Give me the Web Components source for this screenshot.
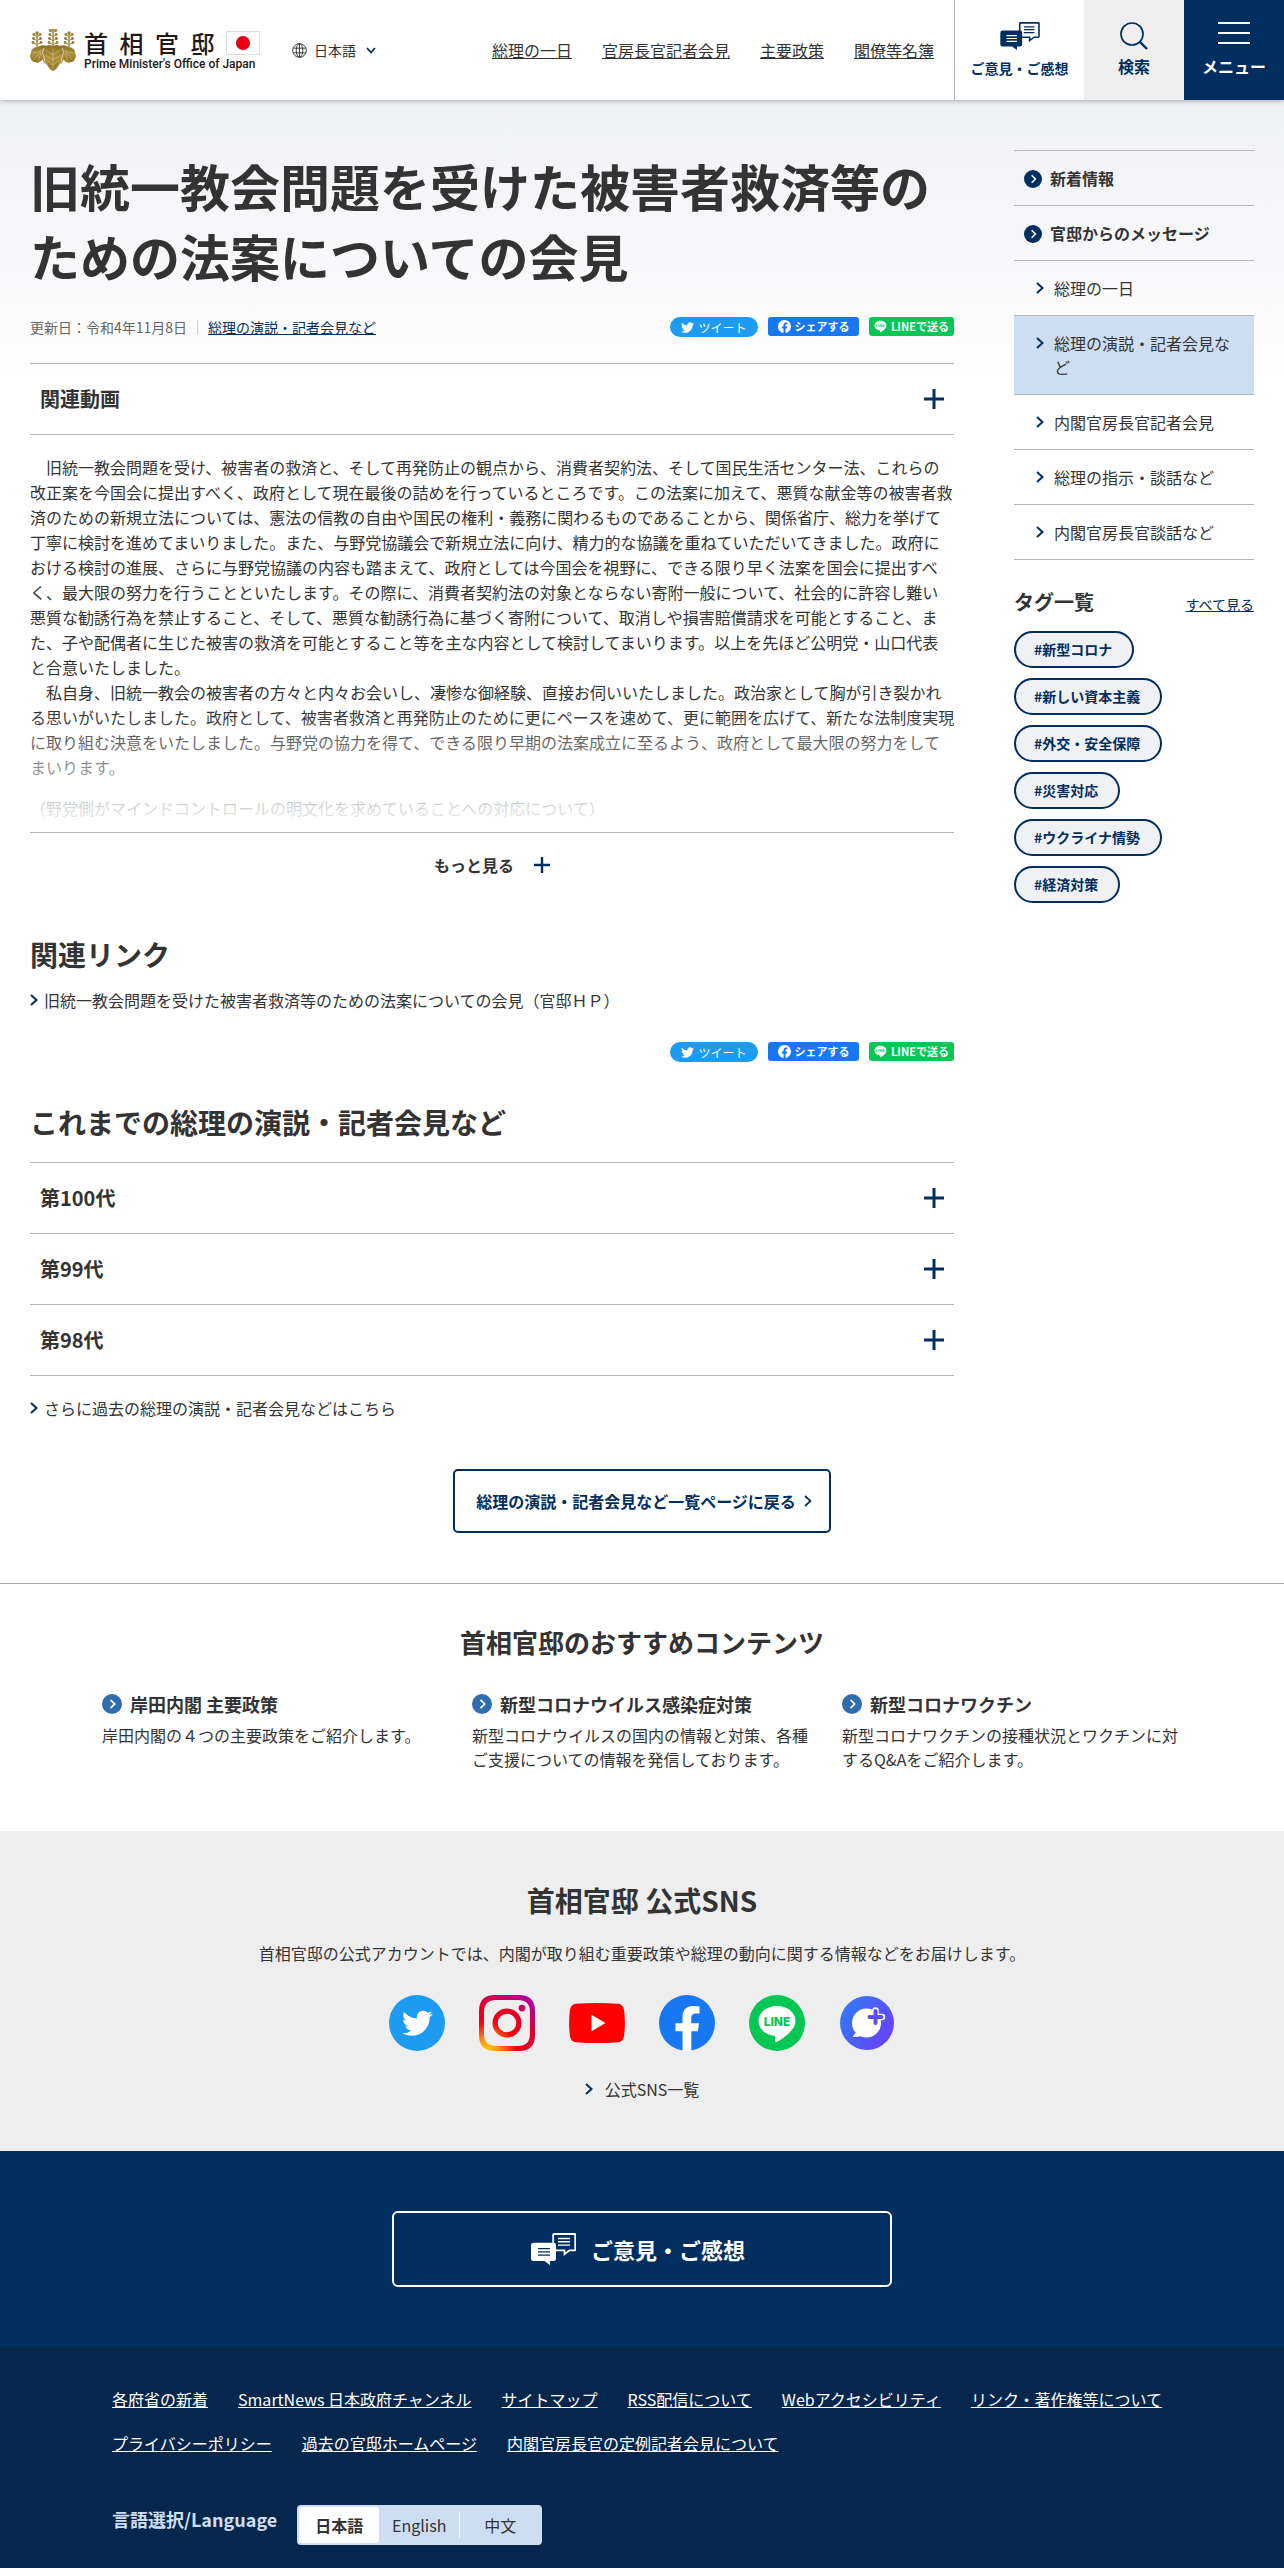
<!DOCTYPE html>
<html lang="ja">
<head>
<meta charset="utf-8">
<meta name="viewport" content="width=device-width, initial-scale=1">
<title>旧統一教会問題を受けた被害者救済等のための法案についての会見 | 首相官邸ホームページ</title>
<style>
body{
    margin: 0;
    background: #fff;
    color: #333;
    font-family: "Noto Sans CJK JP", sans-serif;
    font-size: 16px;
    line-height: 24px;
    --navy: #002e5e;
    --line: #b4b6ba;
    --pale: #cdddf2;
}
more-text .wide{
    margin-right: -1px;
}
more-text .question{
    margin-top: 16px;
}
section-title + accordion-list{
    margin-top: 20px;
}
</style>
</head>
<body>
<site-header></site-header>
<page-columns>
    <article-head slot="main" date="令和4年11月8日" category="総理の演説・記者会見など">旧統一教会問題を受けた被害者救済等のための法案についての会見</article-head>
    <accordion-list slot="main">
        <accordion-item>関連動画</accordion-item>
    </accordion-list>
    <more-text slot="main">
        <div>　旧統一教会問題を受け、被害者の救済と、そして再発防止の観点から、消費者契約法、そして国民生活センター法、これらの改正案を今国会に提出すべく、政府として現在最後の詰めを行っているところです。この法案に加えて、悪質な献金等の被害者救済のための新規立法については、憲法の信教の自由や国民の権利・義務に関わるものであることから、関係省庁、総力を挙げて丁寧に検討を進めてまいりました。また、与野党協議会で新規立法に向け、精力的な協議を重ねていただいてきました。政府における検討の進展、さらに与野党協議の内容も踏まえて、政府としては今国会を視野に、できる限り早く法案を国会に提出すべく、最大限の努力を行うことといたします。その際に、消費者契約法の対象とならない寄附一般について、社会的に許容し難い悪質な勧誘行為を禁止すること、そして、悪質な勧誘行為に基づく寄附について、取消しや損害賠償請求を可能とすること、また、子や配偶者に生じた被害の救済を可能とすること等を主な内容として検討してまいります。以上を先ほど公明党・山口代表と合意いたしました。</div>
        <div class="wide">　私自身、旧統一教会の被害者の方々と内々お会いし、凄惨な御経験、直接お伺いいたしました。政治家として胸が引き裂かれる思いがいたしました。政府として、被害者救済と再発防止のために更にペースを速めて、更に範囲を広げて、新たな法制度実現に取り組む決意をいたしました。与野党の協力を得て、できる限り早期の法案成立に至るよう、政府として最大限の努力をしてまいります。</div>
        <div class="question">（野党側がマインドコントロールの明文化を求めていることへの対応について）</div>
    </more-text>
    <section-title slot="main">関連リンク</section-title>
    <arrow-link slot="main">旧統一教会問題を受けた被害者救済等のための法案についての会見（官邸ＨＰ）</arrow-link>
    <share-buttons slot="main" class="bottom"></share-buttons>
    <section-title slot="main">これまでの総理の演説・記者会見など</section-title>
    <accordion-list slot="main">
        <accordion-item>第100代</accordion-item>
        <accordion-item>第99代</accordion-item>
        <accordion-item>第98代</accordion-item>
    </accordion-list>
    <arrow-link slot="main">さらに過去の総理の演説・記者会見などはこちら</arrow-link>

    <side-nav slot="side">
        <side-link type="head">新着情報</side-link>
        <side-link type="head">官邸からのメッセージ</side-link>
        <side-link>総理の一日</side-link>
        <side-link current>総理の演説・記者会見など</side-link>
        <side-link>内閣官房長官記者会見</side-link>
        <side-link>総理の指示・談話など</side-link>
        <side-link>内閣官房長官談話など</side-link>
    </side-nav>
    <tag-list slot="side">
        <tag-link>#新型コロナ</tag-link>
        <tag-link>#新しい資本主義</tag-link>
        <tag-link>#外交・安全保障</tag-link>
        <tag-link>#災害対応</tag-link>
        <tag-link>#ウクライナ情勢</tag-link>
        <tag-link>#経済対策</tag-link>
    </tag-list>
</page-columns>
<back-link>総理の演説・記者会見など一覧ページに戻る</back-link>
<pickup-section>
    <pickup-card heading="岸田内閣 主要政策">岸田内閣の４つの主要政策をご紹介します。</pickup-card>
    <pickup-card heading="新型コロナウイルス感染症対策">新型コロナウイルスの国内の情報と対策、各種ご支援についての情報を発信しております。</pickup-card>
    <pickup-card heading="新型コロナワクチン">新型コロナワクチンの接種状況とワクチンに対するQ&amp;Aをご紹介します。</pickup-card>
</pickup-section>
<sns-section></sns-section>
<opinion-section></opinion-section>
<site-footer></site-footer>

<script>
// base: puts the html of the class in an open shadow root
class Part extends HTMLElement{
    constructor() {
        super();
        const template = document.createElement('template');
        template.innerHTML = this.html();
        this.attachShadow({mode: 'open'}).appendChild(template.content.cloneNode(true));
    }
}

const BIRD = 'M23.953 4.57a10 10 0 01-2.825.775 4.958 4.958 0 002.163-2.723c-.951.555-2.005.959-3.127 1.184a4.92 4.92 0 00-8.384 4.482C7.69 8.095 4.067 6.13 1.64 3.162a4.822 4.822 0 00-.666 2.475c0 1.71.87 3.213 2.188 4.096a4.904 4.904 0 01-2.228-.616v.06a4.923 4.923 0 003.946 4.827 4.996 4.996 0 01-2.212.085 4.936 4.936 0 004.604 3.417 9.867 9.867 0 01-6.102 2.105c-.39 0-.779-.023-1.17-.067a13.995 13.995 0 007.557 2.209c9.053 0 13.998-7.496 13.998-13.985 0-.21 0-.42-.015-.63A9.935 9.935 0 0024 4.59z';
const FACEBOOK = 'M24 12.073c0-6.627-5.373-12-12-12s-12 5.373-12 12c0 5.99 4.388 10.954 10.125 11.854v-8.385H7.078v-3.47h3.047V9.43c0-3.007 1.792-4.669 4.533-4.669 1.312 0 2.686.235 2.686.235v2.953H15.83c-1.491 0-1.956.925-1.956 1.874v2.25h3.328l-.532 3.47h-2.796v8.385C19.612 23.027 24 18.062 24 12.073z';
const BALLOON = 'M28 11c-10.500 0-18.500 6.600-18.500 15 0 7.400 6.400 13.600 15.200 14.800 2.200.4 1.700 1.600 1.300 5.200-.1 1 .6 1.500 1.600 1 4-2 18.900-11 18.900-21 0-8.400-8-15-18.500-15z';

// one flower stalk of the crest, drawn upwards from its foot
function stalk(x, foot, steps){
    let out = '<path d="M' + x + ' ' + foot + 'v-' + (steps * 4 + 2) + '" stroke="#8d7426" stroke-width="1.200"/>';
    for(let i = 0; i < steps; i++){
        const y = foot - 2.500 - i * 4;
        const w = 4 - i * .400;
        out += '<path d="M' + x + ' ' + y + 'l-' + w + '-1.600M' + x + ' ' + y + 'l' + w + '-1.600" stroke="#a58a35"/>';
        out += '<circle cx="' + (x - w) + '" cy="' + (y - 2) + '" r="1.400"/><circle cx="' + (x + w) + '" cy="' + (y - 2) + '" r="1.400"/>';
    }
    return out + '<circle cx="' + x + '" cy="' + (foot - steps * 4 - 2) + '" r="1.700"/>';
}

const ICONS = {
    chevron: ['0 0 8 12', '<path d="M1 1l5.500 5L1 11" fill="none" stroke="currentColor" stroke-width="2"/>'],
    thin: ['0 0 8 12', '<path d="M1 1l5.500 5L1 11" fill="none" stroke="currentColor" stroke-width="1.700"/>'],
    down: ['0 0 10 7', '<path d="M1 1l4 4.500L9 1" fill="none" stroke="currentColor" stroke-width="1.800"/>'],
    plus: ['0 0 20 20', '<path d="M10 0v20M0 10h20" stroke="currentColor" stroke-width="3"/>'],
    round: ['0 0 20 20', '<circle cx="10" cy="10" r="10" fill="currentColor"/><path d="M8.500 5.800L12.700 10l-4.200 4.200" fill="none" stroke="#fff" stroke-width="1.700"/>'],
    globe: ['0 0 16 16', '<g fill="none" stroke="currentColor"><circle cx="8" cy="8" r="7.300"/><ellipse cx="8" cy="8" rx="3.500" ry="7.300"/><path d="M1.500 5.500h13M1.500 10.500h13M8 1v14"/></g>'],
    search: ['0 0 28 28', '<g fill="none" stroke="currentColor" stroke-width="1.700"><circle cx="12" cy="12" r="11"/><path d="M19.500 19.500l7.500 7.500" stroke-width="2.400"/></g>'],
    menu: ['0 0 32 22', '<path d="M0 1h32M0 11h32M0 21h32" stroke="currentColor" stroke-width="2"/>'],
    talk: ['0 0 45 32', `
        <path d="M23 1h20.500q.7 0 .7.700v15q0 .700-.7.700H38.500l-5 3.800v-3.800H22.200V1.700q0-.7.800-.7z" fill="none" stroke="currentColor" stroke-width="1.800"/>
        <path d="M27 5.500h12M27 8.800h12M27 12.100h12" stroke="currentColor" stroke-width="1.400"/>
        <path d="M2.500 9.800h20q2.500 0 2.500 2.500v13.200q0 2.500-2.500 2.500H19v4l-5.500-4h-11Q0 28 0 25.500V12.300q0-2.500 2.500-2.500z" fill="currentColor"/>
        <path d="M7 15.600h12M7 18.900h12M7 22.200h12" stroke="var(--paper)" stroke-width="1.300"/>`],
    bird: ['0 0 24 24', '<path fill="currentColor" d="' + BIRD + '"/>'],
    fb: ['0 0 24 24', '<path fill="currentColor" d="' + FACEBOOK + '"/>'],
    linemark: ['8 9 40 40', '<path d="' + BALLOON + '" fill="currentColor"/><path d="M16 22v8h4M23 22v8M27 30v-8l5 8v-8M40 22h-4v8h4M36 26h4" fill="none" stroke="#06c755" stroke-width="2"/>'],
    twitter: ['0 0 56 56', '<circle cx="28" cy="28" r="28" fill="#1d9bf0"/><path transform="translate(13 13) scale(1.280)" fill="#fff" d="' + BIRD + '"/>'],
    instagram: ['0 0 56 56', `
        <defs><radialGradient id="ig" cx=".15" cy="1" r="1.250"><stop offset="0" stop-color="#fc0"/><stop offset=".18" stop-color="#fb8c1a"/><stop offset=".42" stop-color="#f00010"/><stop offset=".68" stop-color="#e0002c"/><stop offset=".85" stop-color="#c1007c"/><stop offset="1" stop-color="#b000a0"/></radialGradient></defs>
        <path fill="url(#ig)" fill-rule="evenodd" d="M16 0h24q16 0 16 16v24q0 16-16 16H16Q0 56 0 40V16Q0 0 16 0zM17 5Q5 5 5 17v22q0 12 12 12h22q12 0 12-12V17Q51 5 39 5zM28 13.500a14.500 14.500 0 110 29 14.500 14.500 0 010-29zM28 18.700a9.300 9.300 0 100 18.600 9.300 9.300 0 000-18.600zM43 9.700a3.400 3.400 0 110 6.800 3.400 3.400 0 010-6.800z"/>`],
    youtube: ['0 0 56 56', '<path fill="red" d="M7 8.800Q28 7 49 8.800q5 .5 6 6 1.800 13.200 0 26.400-1 5.500-6 6-21 1.800-42 0-5-.5-6-6-1.800-13.200 0-26.400 1-5.500 6-6z"/><path fill="#fff" d="M22.500 19.800v16.400L36.500 28z"/>'],
    facebook: ['0 0 56 56', '<circle cx="28" cy="28" r="28" fill="#1877f2"/><path fill="#fff" d="M23.500 56V36.200h-7v-8h7V22c0-7.200 4.100-11 10.500-11 3 0 6.500.600 6.500.600v6.800H37c-3.600 0-4.700 2.200-4.700 4.500v5.300h7.800l-1.300 8h-6.500V56q-4.500.5-8.800 0z"/>'],
    line: ['0 0 56 56', '<circle cx="28" cy="28" r="28" fill="#06c755"/><path d="' + BALLOON + '" fill="#fff"/><text x="28" y="31" text-anchor="middle" font-family="Inter, sans-serif" font-size="12" font-weight="800" fill="#06c755">LINE</text>'],
    bubble: ['0 0 56 56', `
        <defs><linearGradient id="bb" x1="0" y1=".2" x2="1" y2=".8"><stop offset="0" stop-color="#2f7bf5"/><stop offset="1" stop-color="#6b3ff5"/></linearGradient></defs>
        <circle cx="28" cy="28" r="27" fill="url(#bb)"/>
        <circle cx="27.500" cy="28" r="14.500" fill="#fff"/>
        <path d="M14 30l3 7.500-3.500 4.500q6 .5 9-1.500z" fill="#fff"/>
        <path d="M36.500 15.500v13M30 22h13" stroke="#fff" stroke-width="6.500" stroke-linecap="round"/>
        <path d="M36.500 16v12M30.500 22h12" stroke="#5a50f2" stroke-width="4" stroke-linecap="round"/>`],
    crest: ['0 0 46 42', `
        <defs><linearGradient id="gold" x1="0" y1="0" x2="0" y2="1"><stop offset="0" stop-color="#8a7023"/><stop offset=".5" stop-color="#b0913c"/><stop offset="1" stop-color="#8f7422"/></linearGradient></defs>
        <g fill="#9a8030">${stalk(7, 18, 3)}${stalk(39, 18, 3)}${stalk(23, 18, 4)}</g>
        <g fill="url(#gold)">
            <path d="M17 17q-5-2-10 1-6 1-6 6-2 3 0 6 1 3 4 3 3 2 6-1 2-1 3-4z"/>
            <path d="M29 17q5-2 10 1 6 1 6 6 2 3 0 6-1 3-4 3-3 2-6-1-2-1-3-4z"/>
            <path d="M23 17q6-3 9 2 4 4 1 9 1 6-4 8-2 4-6 6-4-2-6-6-5-2-4-8-3-5 1-9 3-5 9-2z"/>
        </g>
        <path d="M23 19v21M23 26l-7-5M23 26l7-5M23 31l-8-5M23 31l8-5M23 36l-6-5M23 36l6-5M13 20L4 30M11 22l-8 2M11 24L8 32M33 20l9 10M35 22l8 2M35 24l3 8" stroke="#ddcf9a" stroke-width=".5" fill="none"/>
        <path d="M14 19q-3 5 0 9 0 5 3 8M32 19q3 5 0 9 0 5-3 8" stroke="#fff" stroke-width=".6" fill="none"/>`]
};

class UiIcon extends Part{
    html(){
        const icon = ICONS[this.getAttribute('name')];
        return `
        <style>
        :host{ display: inline-block; flex: none; width: 20px; height: 20px; }
        svg{ display: block; width: 100%; height: 100%; }
        </style>
        <svg viewBox="${icon[0]}" aria-hidden="true">${icon[1]}</svg>`;
    }
}
window.customElements.define('ui-icon', UiIcon);

class SiteLogo extends Part{
    html(){
        return `
        <style>
        :host{ display: block; }
        a{ display: flex; align-items: center; gap: 8px; color: #231815; text-decoration: none; }
        ui-icon{ width: 46px; height: 42px; }
        .top{ display: flex; align-items: center; justify-content: space-between; width: 176px; }
        .name{ font-size: 24px; line-height: 28px; font-weight: 500; }
        .flag{ display: flex; align-items: center; justify-content: center; box-sizing: border-box; width: 34px; height: 24px; background: #fff; border: solid 1px #ddd; }
        .flag i{ width: 14px; height: 14px; border-radius: 50%; background: #e60012; }
        .en{ font-family: Roboto, sans-serif; font-size: 12px; line-height: 14px; font-weight: 500; }
        </style>
        <a href="#">
            <ui-icon name="crest"></ui-icon>
            <div>
                <div class="top"><span class="name">首</span><span class="name">相</span><span class="name">官</span><span class="name">邸</span><span class="flag"><i></i></span></div>
                <div class="en">Prime Minister's Office of Japan</div>
            </div>
        </a>`;
    }
}
window.customElements.define('site-logo', SiteLogo);

class SiteHeader extends Part{
    html(){
        return `
        <style>
        :host{ display: block; position: relative; background: #fff; box-shadow: 0 1px 5px rgba(0,0,0,.3); }
        header{ display: flex; align-items: center; height: 100px; padding-left: 30px; }
        .lang{ display: flex; align-items: center; gap: 7px; margin-left: 32px; border: 0; padding: 0; background: none; font: inherit; font-size: 14px; color: #333; cursor: pointer; }
        .lang ui-icon:first-child{ width: 15px; height: 15px; }
        .lang ui-icon:last-child{ width: 10px; height: 7px; margin-left: 3px; color: var(--navy); }
        nav{ display: flex; gap: 30px; margin: 0 20px 0 auto; }
        nav a{ color: #333; }
        .tool{ box-sizing: border-box; display: flex; flex-direction: column; align-items: center; gap: 4px; width: 100px; height: 100px; padding: 22px 0 0; border: 0; font: inherit; font-weight: bold; color: var(--navy); text-decoration: none; cursor: pointer; }
        .tool.opinion{ gap: 6px; width: 130px; border-left: solid 1px var(--line); font-size: 14px; --paper: #fff; }
        .tool.search{ background: #eee; }
        .tool.menu{ background: var(--navy); color: #fff; }
        .tool ui-icon{ height: 28px; width: 28px; }
        .tool.opinion ui-icon{ width: 40px; }
        .tool.menu ui-icon{ width: 32px; height: 22px; margin-bottom: 6px; }
        </style>
        <header>
            <site-logo></site-logo>
            <button class="lang" type="button"><ui-icon name="globe"></ui-icon>日本語<ui-icon name="down"></ui-icon></button>
            <nav>
                <a href="#">総理の一日</a>
                <a href="#">官房長官記者会見</a>
                <a href="#">主要政策</a>
                <a href="#">閣僚等名簿</a>
            </nav>
            <a class="tool opinion" href="#"><ui-icon name="talk"></ui-icon>ご意見・ご感想</a>
            <button class="tool search" type="button"><ui-icon name="search"></ui-icon>検索</button>
            <button class="tool menu" type="button"><ui-icon name="menu"></ui-icon>メニュー</button>
        </header>`;
    }
}
window.customElements.define('site-header', SiteHeader);

class PageColumns extends Part{
    html(){
        return `
        <style>
        :host{ display: block; padding: 50px 30px 0; background: linear-gradient(#f0f1f5, #fff 300px); }
        .columns{ display: grid; grid-template-columns: minmax(0, 1fr) 240px; gap: 60px; align-items: start; }
        </style>
        <div class="columns">
            <main><slot name="main"></slot></main>
            <aside><slot name="side"></slot></aside>
        </div>`;
    }
}
window.customElements.define('page-columns', PageColumns);

class ShareButtons extends Part{
    html(){
        return `
        <style>
        :host{ display: flex; justify-content: flex-end; align-items: flex-start; gap: 10px; }
        :host(.bottom){ margin: 30px 0 40px; }
        a{ box-sizing: border-box; display: flex; align-items: center; justify-content: center; gap: 4px; height: 19px; border-radius: 3px; color: #fff; font-size: 11px; line-height: 19px; font-weight: bold; text-decoration: none; white-space: nowrap; }
        ui-icon{ width: 13px; height: 13px; }
        .tw{ width: 88px; height: 20px; border-radius: 10px; background: #1d9bf0; font-size: 12px; font-weight: normal; }
        .fb{ width: 91px; background: #1877f2; }
        .ln{ width: 85px; background: #06c755; }
        </style>
        <a class="tw" href="#"><ui-icon name="bird"></ui-icon>ツイート</a>
        <a class="fb" href="#"><ui-icon name="fb"></ui-icon>シェアする</a>
        <a class="ln" href="#"><ui-icon name="linemark"></ui-icon>LINEで送る</a>`;
    }
}
window.customElements.define('share-buttons', ShareButtons);

class ArticleHead extends Part{
    html(){
        return `
        <style>
        :host{ display: block; margin-bottom: 26px; }
        h1{ margin: 0 0 27px; font-size: 50px; line-height: 70px; }
        .meta{ display: flex; align-items: center; gap: 10px; height: 20px; font-size: 14px; line-height: 20px; color: #666; }
        .meta a{ color: var(--navy); }
        .meta i{ width: 1px; height: 14px; background: #ccc; }
        share-buttons{ margin-left: auto; }
        </style>
        <h1><slot></slot></h1>
        <div class="meta">
            <span>更新日：${this.getAttribute('date')}</span><i></i>
            <a href="#">${this.getAttribute('category')}</a>
            <share-buttons></share-buttons>
        </div>`;
    }
}
window.customElements.define('article-head', ArticleHead);

class AccordionList extends Part{
    html(){
        return `
        <style>
        :host{ display: block; margin-bottom: 20px; border-top: solid 1px var(--line); }
        </style>
        <slot></slot>`;
    }
}
window.customElements.define('accordion-list', AccordionList);

class AccordionItem extends Part{
    html(){
        return `
        <style>
        :host{ display: block; border-bottom: solid 1px var(--line); }
        button{ display: flex; align-items: center; justify-content: space-between; width: 100%; height: 70px; padding: 0 10px; border: 0; background: none; font: inherit; font-size: 20px; font-weight: bold; color: #333; cursor: pointer; }
        ui-icon{ color: var(--navy); }
        </style>
        <button type="button" aria-expanded="false"><span><slot></slot></span><ui-icon name="plus"></ui-icon></button>`;
    }
}
window.customElements.define('accordion-item', AccordionItem);

class MoreText extends Part{
    html(){
        return `
        <style>
        :host{ display: block; }
        .text{ position: relative; padding-bottom: 11px; line-height: 25px; border-bottom: solid 1px var(--line); }
        .text::after{ content: ""; position: absolute; left: 0; right: 0; bottom: 0; height: 120px; background: linear-gradient(rgba(255,255,255,0), #fff); }
        button{ display: flex; align-items: center; justify-content: center; gap: 20px; width: 100%; height: 64px; border: 0; background: none; font: inherit; font-weight: bold; color: #333; cursor: pointer; }
        ui-icon{ width: 16px; height: 16px; color: var(--navy); }
        </style>
        <div class="text"><slot></slot></div>
        <button type="button">もっと見る<ui-icon name="plus"></ui-icon></button>`;
    }
}
window.customElements.define('more-text', MoreText);

class SectionTitle extends Part{
    html(){
        return `
        <style>
        :host{ display: block; margin: 37px 0 14px; }
        h2{ margin: 0; font-size: 28px; line-height: 40px; }
        </style>
        <h2><slot></slot></h2>`;
    }
}
window.customElements.define('section-title', SectionTitle);

class ArrowLink extends Part{
    html(){
        return `
        <style>
        :host{ display: block; }
        a{ display: flex; align-items: center; gap: 6px; color: #333; text-decoration: none; }
        ui-icon{ width: 8px; height: 12px; color: var(--navy); }
        </style>
        <a href="#"><ui-icon name="chevron"></ui-icon><span><slot></slot></span></a>`;
    }
}
window.customElements.define('arrow-link', ArrowLink);

class SideNav extends Part{
    html(){
        return `
        <style>
        :host{ display: block; border-top: solid 1px var(--line); }
        </style>
        <nav><slot></slot></nav>`;
    }
}
window.customElements.define('side-nav', SideNav);

class SideLink extends Part{
    html(){
        const head = this.getAttribute('type') == 'head';
        return `
        <style>
        :host{ display: block; border-bottom: solid 1px var(--line); }
        :host([current]){ background: var(--pale); }
        a{ display: flex; align-items: flex-start; gap: 10px; padding: 15px 10px 15px 22px; color: #333; text-decoration: none; }
        ui-icon{ width: 8px; height: 12px; margin-top: 6px; color: var(--navy); }
        :host([type="head"]) a{ gap: 8px; padding-left: 10px; font-weight: bold; }
        :host([type="head"]) ui-icon{ width: 18px; height: 18px; margin-top: 4px; }
        </style>
        <a href="#"><ui-icon name="${head ? 'round' : 'chevron'}"></ui-icon><span><slot></slot></span></a>`;
    }
}
window.customElements.define('side-link', SideLink);

class TagList extends Part{
    html(){
        return `
        <style>
        :host{ display: block; margin-top: 28px; }
        .head{ display: flex; align-items: baseline; justify-content: space-between; margin-bottom: 15px; }
        h2{ margin: 0; font-size: 20px; line-height: 28px; }
        .head a{ font-size: 14px; color: var(--navy); }
        .tags{ display: flex; flex-direction: column; align-items: flex-start; gap: 10px; }
        </style>
        <div class="head"><h2>タグ一覧</h2><a href="#">すべて見る</a></div>
        <div class="tags"><slot></slot></div>`;
    }
}
window.customElements.define('tag-list', TagList);

class TagLink extends Part{
    html(){
        return `
        <style>
        :host{ display: block; }
        a{ display: block; padding: 6px 20px 6px 18px; border: solid 2px var(--navy); border-radius: 20px; background: #f0f1f5; font-size: 14px; line-height: 21px; font-weight: bold; color: var(--navy); text-decoration: none; }
        </style>
        <a href="#"><slot></slot></a>`;
    }
}
window.customElements.define('tag-link', TagLink);

class BackLink extends Part{
    html(){
        return `
        <style>
        :host{ display: flex; justify-content: center; padding: 49px 30px 50px; border-bottom: solid 1px #aaa; }
        a{ box-sizing: border-box; display: flex; align-items: center; gap: 8px; height: 64px; padding: 0 17px 0 21px; border: solid 2px var(--navy); border-radius: 5px; font-weight: bold; color: var(--navy); text-decoration: none; }
        ui-icon{ width: 8px; height: 12px; }
        </style>
        <a href="#"><slot></slot><ui-icon name="thin"></ui-icon></a>`;
    }
}
window.customElements.define('back-link', BackLink);

class PickupSection extends Part{
    html(){
        return `
        <style>
        :host{ display: block; padding: 38px 30px 60px; }
        h2{ margin: 0 0 28px; font-size: 26px; line-height: 40px; text-align: center; }
        .cards{ display: grid; grid-template-columns: repeat(3, 1fr); gap: 30px; max-width: 1080px; margin: 0 auto; }
        </style>
        <h2>首相官邸のおすすめコンテンツ</h2>
        <div class="cards"><slot></slot></div>`;
    }
}
window.customElements.define('pickup-section', PickupSection);

class PickupCard extends Part{
    html(){
        return `
        <style>
        :host{ display: block; }
        h3{ display: flex; align-items: center; gap: 8px; margin: 0 0 5px; font-size: 18px; line-height: 28px; }
        a{ color: inherit; text-decoration: none; }
        ui-icon{ color: #2f6dae; }
        p{ margin: 0; }
        </style>
        <h3><ui-icon name="round"></ui-icon><a href="#">${this.getAttribute('heading')}</a></h3>
        <p><slot></slot></p>`;
    }
}
window.customElements.define('pickup-card', PickupCard);

class SnsSection extends Part{
    html(){
        return `
        <style>
        :host{ display: flex; flex-direction: column; align-items: center; padding: 49px 30px 50px; background: #eee; }
        h2{ margin: 0 0 21px; font-size: 28px; line-height: 40px; }
        p{ margin: 0 0 30px; }
        .icons{ display: flex; gap: 34px; margin-bottom: 26px; }
        .icons ui-icon{ display: block; width: 56px; height: 56px; }
        .list{ display: flex; align-items: center; gap: 12px; color: #333; text-decoration: none; }
        .list ui-icon{ width: 8px; height: 12px; color: var(--navy); }
        </style>
        <h2>首相官邸 公式SNS</h2>
        <p>首相官邸の公式アカウントでは、内閣が取り組む重要政策や総理の動向に関する情報などをお届けします。</p>
        <div class="icons">
            ${['twitter', 'instagram', 'youtube', 'facebook', 'line', 'bubble'].map(name => `<a href="#" aria-label="${name}"><ui-icon name="${name}"></ui-icon></a>`).join('')}
        </div>
        <a class="list" href="#"><ui-icon name="chevron"></ui-icon>公式SNS一覧</a>`;
    }
}
window.customElements.define('sns-section', SnsSection);

class OpinionSection extends Part{
    html(){
        return `
        <style>
        :host{ display: block; padding: 60px 30px; background: var(--navy); --paper: var(--navy); }
        a{ box-sizing: border-box; display: flex; align-items: center; justify-content: center; gap: 15px; max-width: 500px; height: 76px; margin: 0 auto; padding-right: 8px; border: solid 2px #fff; border-radius: 6px; font-size: 22px; font-weight: bold; color: #fff; text-decoration: none; }
        ui-icon{ width: 45px; height: 32px; }
        </style>
        <a href="#"><ui-icon name="talk"></ui-icon>ご意見・ご感想</a>`;
    }
}
window.customElements.define('opinion-section', OpinionSection);

class LangSwitch extends Part{
    html(){
        return `
        <style>
        :host{ display: flex; gap: 20px; }
        strong{ font-size: 18px; line-height: 28px; color: var(--pale); }
        .box{ display: flex; align-items: center; padding: 2px; border-radius: 4px; background: var(--pale); }
        a{ width: 80px; line-height: 36px; border-radius: 3px; text-align: center; color: #333; text-decoration: none; }
        a.on{ background: #fff; font-weight: bold; }
        i{ width: 1px; height: 26px; background: #fff; }
        </style>
        <strong>言語選択/Language</strong>
        <div class="box">
            <a class="on" href="#">日本語</a>
            <a href="#">English</a><i></i>
            <a href="#">中文</a>
        </div>`;
    }
}
window.customElements.define('lang-switch', LangSwitch);

class SiteFooter extends Part{
    html(){
        return `
        <style>
        :host{ display: block; padding: 40px 30px; background: #06274b; }
        footer{ max-width: 1060px; margin: 0 auto; }
        nav{ display: flex; flex-wrap: wrap; gap: 20px 30px; margin-bottom: 50px; }
        nav a{ color: #fff; }
        </style>
        <footer>
            <nav>
                <a href="#">各府省の新着</a>
                <a href="#">SmartNews 日本政府チャンネル</a>
                <a href="#">サイトマップ</a>
                <a href="#">RSS配信について</a>
                <a href="#">Webアクセシビリティ</a>
                <a href="#">リンク・著作権等について</a>
                <a href="#">プライバシーポリシー</a>
                <a href="#">過去の官邸ホームページ</a>
                <a href="#">内閣官房長官の定例記者会見について</a>
            </nav>
            <lang-switch></lang-switch>
        </footer>`;
    }
}
window.customElements.define('site-footer', SiteFooter);
</script>
</body>
</html>
